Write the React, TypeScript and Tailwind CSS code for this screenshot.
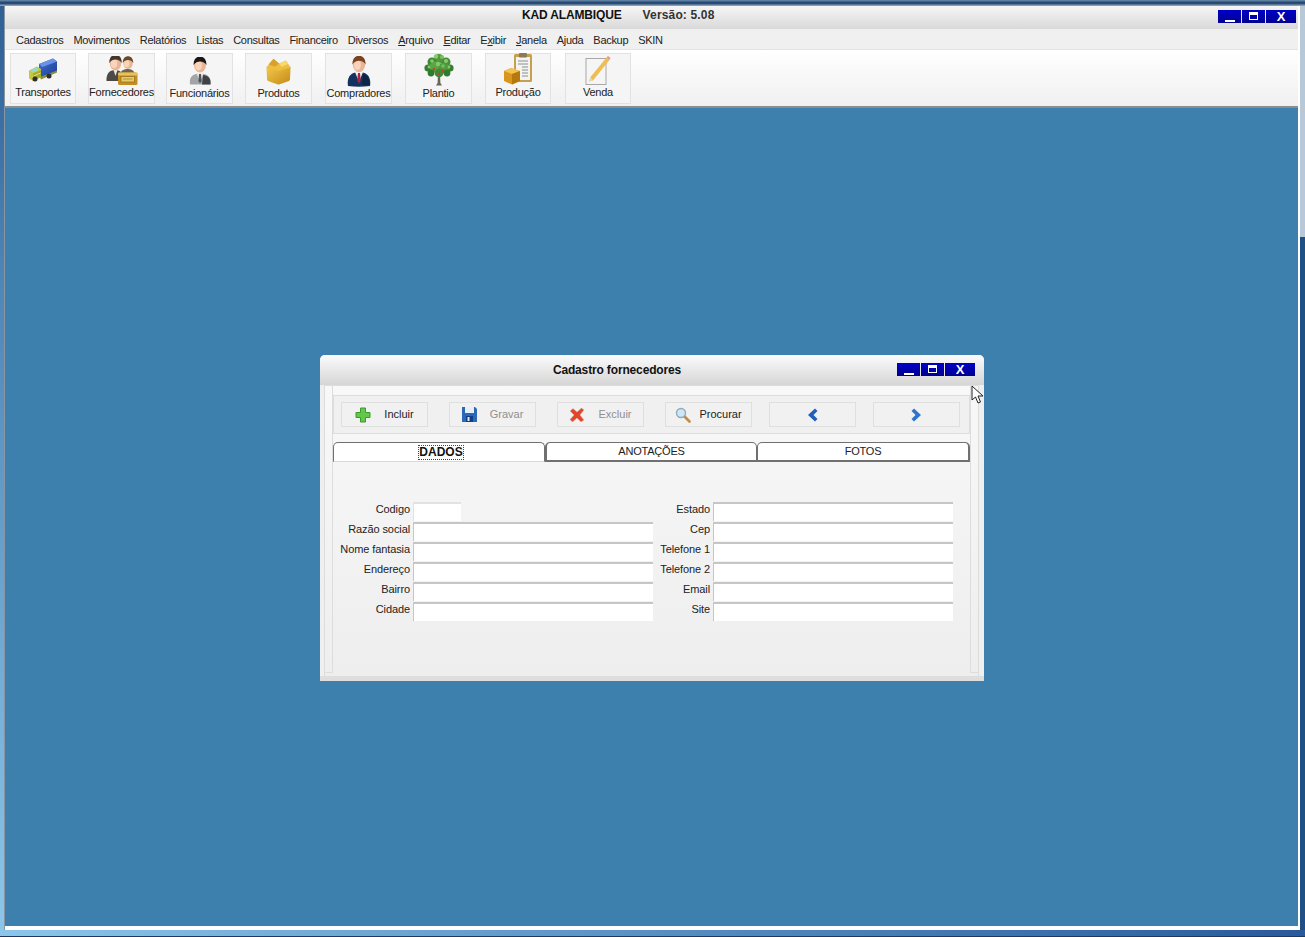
import type { ReactNode } from "react";

const FONT = "font-['Liberation_Sans',Arial,sans-serif]";

function Head({ x, y, r = 5, hair = "#3b2a1e" }: { x: number; y: number; r?: number; hair?: string }) {
  return (
    <g>
      <ellipse cx={x} cy={y} rx={r} ry={r * 1.25} fill="#eab595" />
      <ellipse cx={x - r * 0.25} cy={y + r * 0.1} rx={r * 0.55} ry={r * 0.8} fill="#f8d4bd" />
      <path d={`M${x - r - 0.4} ${y}C${x - r - 1} ${y - r * 1.9} ${x + r + 1} ${y - r * 1.9} ${x + r + 0.4} ${y}C${x + r * 0.7} ${y - r * 0.7} ${x - r * 0.5} ${y - r * 0.9} ${x - r - 0.4} ${y}Z`} fill={hair} />
    </g>
  );
}

function TruckIcon() {
  return (
    <svg className="mb-[3px]" width="30" height="24" viewBox="0 0 30 24">
      <defs>
        <linearGradient id="cargo" x1="0" y1="0" x2="1" y2="1">
          <stop offset="0" stopColor="#3f6fd0" />
          <stop offset="1" stopColor="#1c3f96" />
        </linearGradient>
      </defs>
      <path d="M11 6L25 0.5L29 3.5V13L14 19.5L11 17Z" fill="url(#cargo)" />
      <path d="M11 6L25 0.5L29 3.5L14.5 9Z" fill="#6a92e6" />
      <path d="M12 19L29 12.5V14.5L13 21.5Z" fill="#8d8f3a" />
      <path d="M1 12.5L9 8.5L13 11V19L5 23L1 20.5Z" fill="#c8c641" />
      <path d="M2 12.5L8 9.7L11.5 11.5L5 14.5Z" fill="#8fdcd4" />
      <path d="M5 15.5L13 12V19L5 23Z" fill="#a2ab2e" />
      <path d="M5.5 18L12.5 15" stroke="#e6e47a" strokeWidth="1" />
      <circle cx="7" cy="21" r="2.5" fill="#2f2f2f" />
      <circle cx="21" cy="18" r="2.5" fill="#2f2f2f" />
    </svg>
  );
}

function SuppliersIcon() {
  return (
    <svg width="32" height="29" viewBox="0 0 32 29">
      <path d="M0.5 25C0 17 4 14 9.5 14C15 14 18 18 18 25Z" fill="#4d4a46" />
      <path d="M14 22C13 15 17 13 22 13C27 13 29 16 29 20V23Z" fill="#6d6552" />
      <path d="M7.5 14L9.5 20L11.5 14Z" fill="#ece8e0" />
      <Head x={22} y={7} r={4.8} hair="#6a4a22" />
      <Head x={9.5} y={7} r={5.8} hair="#43362a" />
      <rect x="12" y="16.5" width="19.5" height="12.5" rx="1.5" fill="#c48f22" />
      <rect x="12" y="16.5" width="19.5" height="3" rx="1" fill="#e8c15a" />
      <rect x="15" y="20.5" width="13.5" height="5.5" fill="#e9c868" stroke="#8f6c1c" strokeWidth="0.7" />
      <path d="M17 23H26.5" stroke="#a8842c" strokeWidth="0.8" />
    </svg>
  );
}

function EmployeeIcon() {
  return (
    <svg width="24" height="28" viewBox="0 0 24 28">
      <path d="M2 27.5C1 20 4.5 16.5 12 16.5C19.5 16.5 23.5 20 22.5 27.5Z" fill="#a2a5a7" />
      <path d="M15 18C20 18.5 23 21 22.5 27.5H14Z" fill="#3e4244" />
      <path d="M8.5 16L12 26L15.5 16Z" fill="#ececec" />
      <path d="M11 17H13L13.6 24L12 26.5L10.4 24Z" fill="#4f5355" />
      <Head x={12} y={8} r={6} hair="#1b1714" />
    </svg>
  );
}

function BoxIcon() {
  return (
    <svg width="27" height="27" viewBox="0 0 27 27">
      <defs>
        <linearGradient id="boxFace" x1="0" y1="0" x2="1" y2="1">
          <stop offset="0" stopColor="#f4c84e" />
          <stop offset="1" stopColor="#c48a14" />
        </linearGradient>
      </defs>
      <path d="M1.5 10C1 9 2 8 3 8.5L13.5 12L24 8.5C25 8 26 9 25.5 10L25 21C25 22 24.5 22.5 24 23L14 26.5H13L3 23C2.5 22.5 2 22 2 21Z" fill="url(#boxFace)" />
      <path d="M1.5 9.5L8.5 0.8L14 5.5L21 2.5L25.5 9.5L13.5 13Z" fill="#eebd3f" />
      <path d="M8.5 0.8L14 5.5L10 8.5L3.5 6.5Z" fill="#d9a02a" />
      <path d="M14 5.5L21 2.5L23 6L16.5 9Z" fill="#f7d76e" />
    </svg>
  );
}

function BuyerIcon() {
  return (
    <svg className="-mb-[2px]" width="24" height="31" viewBox="0 0 24 31">
      <path d="M1 30C-0.5 21 4 16 12 16C20 16 24.5 21 23 30C16 31 8 31 1 30Z" fill="#143260" />
      <path d="M16 18C20 19 23 22 22.5 29H15Z" fill="#0d2446" />
      <path d="M8 16L12 26L16 16Z" fill="#f2f2f2" />
      <path d="M11 17H13L13.8 24L12 28L10.2 24Z" fill="#a8243c" />
      <Head x={12} y={8.5} r={6.2} hair="#7a4420" />
    </svg>
  );
}

function TreeIcon() {
  const leaves: [number, number, number, string][] = [
    [15, 6, 5, "#4f9a3c"], [8, 9, 4.5, "#3f8a35"], [22, 9, 4.5, "#478f38"],
    [4, 15, 3.6, "#357e30"], [26, 15, 3.6, "#357e30"], [11, 14, 5.5, "#5aa644"],
    [20, 15, 5.5, "#4f9a3c"], [7, 20, 3.4, "#2f7a2e"], [23, 20, 3.4, "#2f7a2e"],
    [15, 20, 4.4, "#3f8a35"], [12, 3.5, 2.2, "#8bcb6e"], [18, 4, 2, "#7cc060"],
    [8, 8, 1.8, "#86c76a"], [22, 8, 2, "#8bcb6e"], [14, 11, 2.2, "#86c76a"],
    [25, 14, 1.4, "#86c76a"], [5, 14, 1.4, "#86c76a"], [19, 13, 1.8, "#79bb5e"],
  ];
  return (
    <svg className="-mb-[1px]" width="30" height="33" viewBox="0 0 30 33">
      <path d="M14 20H16L16.4 30L18 32.5H12L13.6 30Z" fill="#686658" />
      {leaves.map(([cx, cy, r, fill]) => (
        <circle key={`${cx}-${cy}`} cx={cx} cy={cy} r={r} fill={fill} />
      ))}
      <circle cx="10" cy="16" r="1.3" fill="#c8402e" />
      <circle cx="19" cy="18" r="1.4" fill="#c8402e" />
      <circle cx="15" cy="21" r="1.2" fill="#c8402e" />
    </svg>
  );
}

function ProductionIcon() {
  return (
    <svg width="30" height="32" viewBox="0 0 30 32">
      <rect x="11" y="1" width="18" height="28" rx="1.5" fill="#c4a050" />
      <rect x="13" y="4" width="14" height="23" fill="#f3f3f0" />
      <rect x="16" y="0" width="8" height="4.5" rx="1" fill="#8a7a56" />
      <path d="M15 8H25M15 11H25M19 14H25M19 17H25M19 20H25M19 23H25" stroke="#8a8f96" strokeWidth="1" />
      <path d="M1 18L8 15L17 18V28L9 31.5L1 28Z" fill="#d9951d" />
      <path d="M1 18L8 15L17 18L9 21Z" fill="#f2c350" />
      <path d="M9 21L17 18V28L9 31.5Z" fill="#b87810" />
    </svg>
  );
}

function SaleIcon() {
  return (
    <svg width="26" height="29" viewBox="0 0 26 29">
      <rect x="1" y="2.5" width="20" height="26" fill="#f5f5f5" stroke="#a8a8a8" />
      <path d="M4 25.5L8 24.5L24.5 4L21.5 1.5L5.5 21Z" fill="#f0bd55" />
      <path d="M21.5 1.5L24.5 4L25.5 2L23 0Z" fill="#dc9a9a" />
      <path d="M4 25.5L8 24.5L5.5 21Z" fill="#e7d7b6" />
    </svg>
  );
}

function ToolButton({ label, icon, w, ml, labelClass = "" }: { label: string; icon: ReactNode; w: string; ml: string; labelClass?: string }) {
  return (
    <div className={`${w} ${ml} h-[51px] flex flex-col items-center border border-[#e2e2e2] bg-[#f5f5f5]`}>
      <div className="h-[31px] flex items-end justify-center">{icon}</div>
      <span className={`text-[11px] tracking-[-0.25px] leading-[14px] text-[#222] whitespace-nowrap ${labelClass}`}>{label}</span>
    </div>
  );
}

function WinButtons({ className = "" }: { className?: string }) {
  return (
    <div className={`flex h-[13px] gap-px ${className}`}>
      <div className="w-[23px] bg-gradient-to-b from-[#0000c8] to-[#000090] flex items-end justify-center pb-[1px]">
        <div className="w-[10px] h-[2px] bg-white" />
      </div>
      <div className="w-[23px] bg-gradient-to-b from-[#0000c8] to-[#000090] flex items-center justify-center">
        <div className="w-[9px] h-[8px] border border-white border-t-[3px]" />
      </div>
      <div className="w-[30px] bg-gradient-to-b from-[#0000c8] to-[#000090] flex items-center justify-center text-white text-[13px] leading-none font-bold">X</div>
    </div>
  );
}

function ActionButton({ label, icon, disabled, gap = "gap-[13px]", ml = "" }: { label?: string; icon: ReactNode; disabled?: boolean; gap?: string; ml?: string }) {
  return (
    <div className={`w-[87px] h-[25px] shrink-0 flex items-center justify-center ${gap} ${ml} border border-[#dfdfdf] bg-[#f1f1f1] text-[11px] ${disabled ? "text-[#8f8f8f]" : "text-[#222]"}`}>
      {icon}
      {label && <span>{label}</span>}
    </div>
  );
}

function Field({ label, labelW, w, faint }: { label: string; labelW: string; w: string; faint?: boolean }) {
  return (
    <div className="flex items-start h-[20px]">
      <span className={`${labelW} text-right pr-[3px] text-[11px] tracking-[-0.1px] leading-[14px] text-[#222] whitespace-nowrap`}>{label}</span>
      <div className={`${w} h-[19px] bg-white border-t-2 border-l ${faint ? "border-[#e2e2e2]" : "border-[#c6c6c6]"}`} />
    </div>
  );
}

function Tab({ label, active, w, extra = "" }: { label: string; active?: boolean; w: string; extra?: string }) {
  return (
    <div className={`${w} h-[20px] flex items-center justify-center bg-white rounded-t-[5px] border border-[#707070] text-[#222] ${active ? "border-b-[#d8d8d8] pl-[4px] text-[12px]" : "border-b-2 text-[11px] tracking-[-0.2px]"} ${extra}`}>
      {active ? (
        <span className="font-bold leading-[13px] text-[#111] outline-1 outline-dotted outline-[#444]">{label}</span>
      ) : (
        label
      )}
    </div>
  );
}

const leftFields = [
  { label: "Codigo", w: "w-[48px]", faint: true },
  { label: "Razão social", w: "w-[240px]" },
  { label: "Nome fantasia", w: "w-[240px]" },
  { label: "Endereço", w: "w-[240px]" },
  { label: "Bairro", w: "w-[240px]" },
  { label: "Cidade", w: "w-[240px]" },
];

const rightFields = ["Estado", "Cep", "Telefone 1", "Telefone 2", "Email", "Site"];

const menu = ["Cadastros", "Movimentos", "Relatórios", "Listas", "Consultas", "Financeiro", "Diversos"];

export default function App() {
  return (
    <div className={`${FONT} w-[1305px] h-[937px] overflow-hidden flex flex-col bg-[#2f5f95]`}>
      {/* outer frame top */}
      <div className="h-[6px] bg-gradient-to-b from-[#6d8fb0] via-[#173a66] to-[#9fb5c8]" />

      <div className="flex-1 flex min-h-0">
        <div className="w-[4px] bg-gradient-to-b from-[#2f5f95] via-[#4f86b8] via-30% to-[#8cc6ea]" />

        <div className="w-[1296px] flex flex-col border-l border-r-2 border-l-[#8a97a3] border-r-white">
          {/* title bar */}
          <div className="h-[23px] flex items-center bg-gradient-to-b from-[#f6f6f6] to-[#d9d9d9]">
            <div className="pl-[517px] pb-[6px] text-[12px] font-bold text-[#111] whitespace-nowrap">
              <span className="tracking-[-0.15px] mr-[21px]">KAD ALAMBIQUE</span>
              <span className="tracking-[0.15px] text-[#333]">Versão: 5.08</span>
            </div>
            <WinButtons className="ml-auto mr-[2px] mb-[3px]" />
          </div>

          {/* menu bar */}
          <div className="h-[21px] flex items-center pt-[2px] bg-[#f0f0f0] border-b border-[#e4e4e4] pl-[11px] text-[11px] tracking-[-0.3px] text-[#222] gap-[10px] whitespace-nowrap">
            {menu.map((m) => (
              <span key={m}>{m}</span>
            ))}
            <span><u>A</u>rquivo</span>
            <span><u>E</u>ditar</span>
            <span>E<u>x</u>ibir</span>
            <span><u>J</u>anela</span>
            <span>Ajuda</span>
            <span>Backup</span>
            <span>SKIN</span>
          </div>

          {/* toolbar */}
          <div className="h-[58px] flex pt-[3px] bg-gradient-to-b from-[#ffffff] to-[#f0f0f0] border-b-2 border-[#8d8d8d]">
            <ToolButton label="Transportes" icon={<TruckIcon />} w="w-[66px]" ml="ml-[5px]" />
            <ToolButton label="Fornecedores" icon={<SuppliersIcon />} w="w-[67px]" ml="ml-[12px]" />
            <ToolButton label="Funcionários" icon={<EmployeeIcon />} w="w-[67px]" ml="ml-[11px]" labelClass="mt-px" />
            <ToolButton label="Produtos" icon={<BoxIcon />} w="w-[67px]" ml="ml-[12px]" labelClass="mt-px" />
            <ToolButton label="Compradores" icon={<BuyerIcon />} w="w-[67px]" ml="ml-[13px]" labelClass="mt-px" />
            <ToolButton label="Plantio" icon={<TreeIcon />} w="w-[67px]" ml="ml-[13px]" labelClass="mt-px" />
            <ToolButton label="Produção" icon={<ProductionIcon />} w="w-[66px]" ml="ml-[13px]" />
            <ToolButton label="Venda" icon={<SaleIcon />} w="w-[66px]" ml="ml-[14px]" />
          </div>

          {/* desktop */}
          <div className="flex-1 bg-[#3d80ae] pt-[247px] pl-[315px] relative">
            {/* child window */}
            <div className="w-[664px] h-[326px] rounded-t-[5px] bg-[#efefef] flex flex-col">
              <div className="h-[30px] flex items-center rounded-t-[5px] bg-gradient-to-b from-[#fbfbfb] to-[#d6d6d6] shrink-0">
                <div className="flex-1 text-center pl-[17px] text-[12px] font-bold text-[#111] mb-[1px] tracking-[-0.15px]">Cadastro fornecedores</div>
                <WinButtons className="mr-[9px] mb-[2px] w-[78px]" />
              </div>

              <div className="flex-1 flex min-h-0 ml-[4px] mr-[5px] border-t border-l border-r border-[#dddddd] bg-gradient-to-b from-[#f8f8f8] to-[#eeeeee]">
                <div className="w-[8px] mb-[3px] border-r border-b border-[#dddddd]" />

                <div className="flex-1 pt-[9px]">
                  {/* actions */}
                  <div className="h-[39px] flex items-center pl-[7px] border border-[#dddddd] bg-[#f0f0f0]">
                    <ActionButton
                      label="Incluir"
                      icon={
                        <svg width="16" height="16" viewBox="0 0 16 16">
                          <path d="M5.5 1H10.5V5.5H15V10.5H10.5V15H5.5V10.5H1V5.5H5.5Z" fill="#62c84a" stroke="#3a9a2c" />
                        </svg>
                      }
                    />
                    <ActionButton
                      label="Gravar"
                      disabled
                      ml="ml-[21px]"
                      icon={
                        <svg width="15" height="15" viewBox="0 0 15 15">
                          <path d="M0 0H13L15 2V15H0Z" fill="#2d68b8" />
                          <rect x="3" y="0" width="9" height="6" fill="#e8eef6" />
                          <rect x="4" y="9" width="7" height="6" fill="#0f3f86" />
                          <rect x="5.5" y="10" width="2" height="4" fill="#dfe8f2" />
                        </svg>
                      }
                    />
                    <ActionButton
                      label="Excluir"
                      disabled
                      ml="ml-[21px]"
                      icon={
                        <svg width="16" height="16" viewBox="0 0 16 16">
                          <path d="M1 4L4 1.5L8 5L12.5 1L15 3L11 8L15 13L12 15L8 11L3.5 15L1 12.5L5 8Z" fill="#e2452c" stroke="#c9c0b0" strokeWidth="0.5" />
                        </svg>
                      }
                    />
                    <ActionButton
                      label="Procurar"
                      gap="gap-[8px]"
                      ml="ml-[21px]"
                      icon={
                        <svg width="16" height="16" viewBox="0 0 16 16">
                          <path d="M9 9L14.5 14.5" stroke="#c98a3c" strokeWidth="2.6" strokeLinecap="round" />
                          <circle cx="6" cy="6" r="4.5" fill="#cfe6f7" stroke="#8fa9bd" strokeWidth="1.4" />
                        </svg>
                      }
                    />
                    <ActionButton
                      ml="ml-[17px]"
                      icon={
                        <svg width="11" height="14" viewBox="0 0 11 14">
                          <path d="M8 0.5L10.5 3L6.5 7L10.5 11L8 13.5L1 7Z" fill="#1f5fbe" />
                        </svg>
                      }
                    />
                    <ActionButton
                      ml="ml-[17px]"
                      icon={
                        <svg width="11" height="14" viewBox="0 0 11 14">
                          <path d="M3 0.5L0.5 3L4.5 7L0.5 11L3 13.5L10 7Z" fill="#2f74cc" />
                        </svg>
                      }
                    />
                  </div>

                  {/* tabs */}
                  <div className="flex mt-[8px]">
                    <Tab label="DADOS" active w="w-[212px]" />
                    <Tab label="ANOTAÇÕES" w="w-[212px]" extra="border-l-2" />
                    <Tab label="FOTOS" w="w-[213px]" extra="border-r-2" />
                  </div>

                  {/* form */}
                  <div className="flex mt-[40px]">
                    <div className="w-[320px]">
                      {leftFields.map((f) => (
                        <Field key={f.label} label={f.label} labelW="w-[80px]" w={f.w} faint={f.faint} />
                      ))}
                    </div>
                    <div className="w-[300px]">
                      {rightFields.map((f) => (
                        <Field key={f} label={f} labelW="w-[60px]" w="w-[240px]" />
                      ))}
                    </div>
                  </div>
                </div>

                <div className="w-[8px] mb-[3px] border-l border-b border-[#dddddd]" />
              </div>
              <div className="h-[5px] shrink-0 bg-[#dedede]" />
            </div>

            {/* mouse cursor */}
            <svg className="absolute left-[966px] top-[277px]" width="14" height="20" viewBox="0 0 14 20">
              <path d="M1 1V15L4.5 12L7 18L9.5 17L7 11H12Z" fill="#ffffff" stroke="#222222" strokeWidth="1" />
            </svg>
          </div>

          <div className="h-[4px] bg-white" />
        </div>

        <div className="w-[5px] bg-gradient-to-b from-[#b7c9d8] from-25% to-[#1f4f85] to-25%" />
      </div>

      {/* outer frame bottom */}
      <div className="h-[7px] border-b border-[#1b3a60] bg-gradient-to-r from-[#8cc6ea] to-[#2a5a9c]" />
    </div>
  );
}
